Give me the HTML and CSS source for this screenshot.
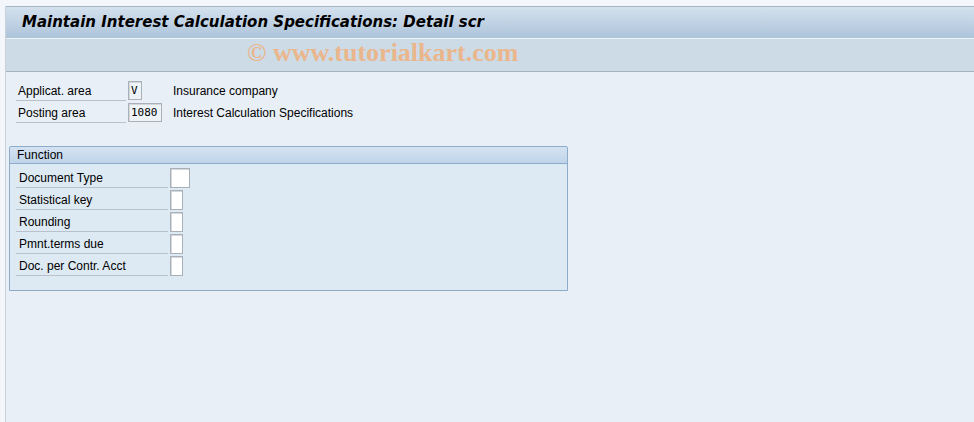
FILE: index.html
```html
<!DOCTYPE html>
<html lang="en">
<head>
    <meta charset="UTF-8">
    <title>Maintain Interest Calculation Specifications</title>
    <link rel="stylesheet" href="styles.css">
</head>
<body>
    <div class="screen">
        <div class="titlebar">Maintain Interest Calculation Specifications: Detail scr</div>
        <div class="toolbar"><span class="mark">&copy; www.tutorialkart.com</span></div>

        <div class="content">
            <div class="head-rows">
                <span class="label">Applicat. area</span>
                <span><span class="field small">V</span></span>
                <span class="desc">Insurance company</span>

                <span class="label">Posting area</span>
                <span><span class="field wide">1080</span></span>
                <span class="desc">Interest Calculation Specifications</span>
            </div>

            <div class="group">
                <div class="group-title">Function</div>
                <div class="group-body">
                    <div class="frow">
                        <span class="flabel">Document Type</span>
                        <span class="check big"></span>
                    </div>
                    <div class="frow">
                        <span class="flabel">Statistical key</span>
                        <span class="check"></span>
                    </div>
                    <div class="frow">
                        <span class="flabel">Rounding</span>
                        <span class="check"></span>
                    </div>
                    <div class="frow">
                        <span class="flabel">Pmnt.terms due</span>
                        <span class="check"></span>
                    </div>
                    <div class="frow">
                        <span class="flabel">Doc. per Contr. Acct</span>
                        <span class="check"></span>
                    </div>
                </div>
            </div>
        </div>
    </div>
</body>
</html>
```

FILE: styles.css
```css
/* SAP GUI screen */
body {
    margin: 0;
    padding: 0;
    background-color: #f3f6fa;
    font-family: "Liberation Sans", Arial, sans-serif;
    font-size: 12px;
    color: #000;
}

.screen {
    margin: 6px 0 0 5px;
    border-left: 1px solid #c9d1db;
    background-color: #e8eff7;
    height: 416px;
}

.titlebar {
    height: 31px;
    line-height: 31px;
    border-top: 1px solid #a8b4c2;
    background: linear-gradient(#d4e1ee, #adc4da);
    padding-left: 16px;
    font-family: "DejaVu Sans", sans-serif;
    font-weight: bold;
    font-style: italic;
    font-size: 15px;
}

.toolbar {
    height: 32px;
    border-top: 1px solid #eef3f8;
    border-bottom: 1px solid #a6b3c1;
    background-color: #cddbe7;
    padding-left: 241px;
}

.mark {
    font-family: "Liberation Serif", serif;
    font-weight: bold;
    font-size: 26px;
    line-height: 28px;
    color: #eab68c;
}

.content {
    padding: 7px 0 0 3px;
}

.head-rows {
    display: grid;
    grid-template-columns: 110px 43px auto;
    column-gap: 2px;
    grid-auto-rows: 22px;
    align-items: end;
    padding-left: 7px;
}

.label {
    padding-left: 2px;
    border-bottom: 1px solid #b9c1ca;
    line-height: 18px;
}

.field {
    display: block;
    height: 19px;
    line-height: 17px;
    border: 1px solid #a9b0b8;
    box-shadow: inset 1px 1px 0 #d4d8dd;
    background-color: #eef3f8;
    font-family: "DejaVu Sans Mono", monospace;
    font-size: 11px;
    padding-left: 2px;
    box-sizing: border-box;
    margin-bottom: 1px;
}

.small {
    width: 14px;
}

.wide {
    width: 34px;
}

.desc {
    line-height: 19px;
}

.group {
    margin-top: 23px;
    width: 557px;
    border: 1px solid #8fabca;
    border-radius: 2px 2px 0 0;
    background-color: #dde9f3;
}

.group-title {
    height: 16px;
    line-height: 16px;
    padding-left: 7px;
    background: linear-gradient(#d4e3f2, #bfd4e9);
    border-bottom: 1px solid #8fabca;
}

.group-body {
    padding: 2px 0 14px 6px;
}

.frow {
    display: flex;
    align-items: flex-end;
    height: 22px;
}

.flabel {
    width: 152px;
    box-sizing: border-box;
    padding-left: 3px;
    border-bottom: 1px solid #b9c1ca;
    line-height: 18px;
    margin-right: 2px;
}

.check {
    width: 13px;
    height: 20px;
    box-sizing: border-box;
    border: 1px solid #a9b0b8;
    box-shadow: inset 1px 1px 0 #d4d8dd;
    background-color: #fff;
}

.check.big {
    width: 20px;
}
```
